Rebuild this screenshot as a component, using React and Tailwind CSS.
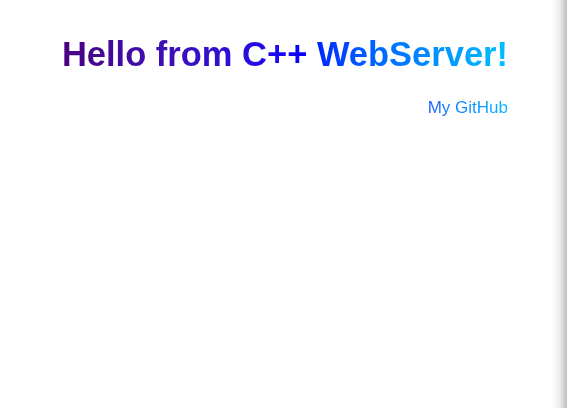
export default function App() {
  return (
    <div className="flex h-[408px] w-[567px] bg-white" style={{ fontFamily: '"Liberation Sans", Arial, sans-serif' }}>
      <main className="flex-1 pt-[37px] pr-[44px] text-right">
        <h1 className="text-[34.5px] font-bold leading-none">
          <span className="bg-gradient-to-r from-[#4b0082] via-[#0000ff] via-55% to-[#00bfff] bg-clip-text text-transparent">
            Hello from C++ WebServer!
          </span>
        </h1>
        <p className="mt-[27px] text-[17px] leading-none">
          <a href="#" className="bg-gradient-to-r from-[#1f5fff] to-[#0fb8ff] bg-clip-text text-transparent">
            My GitHub
          </a>
        </p>
      </main>
      <div className="w-[15px] bg-gradient-to-r from-[#ffffff] via-[#eeeeee] to-[#bdbdbd]" />
    </div>
  );
}
